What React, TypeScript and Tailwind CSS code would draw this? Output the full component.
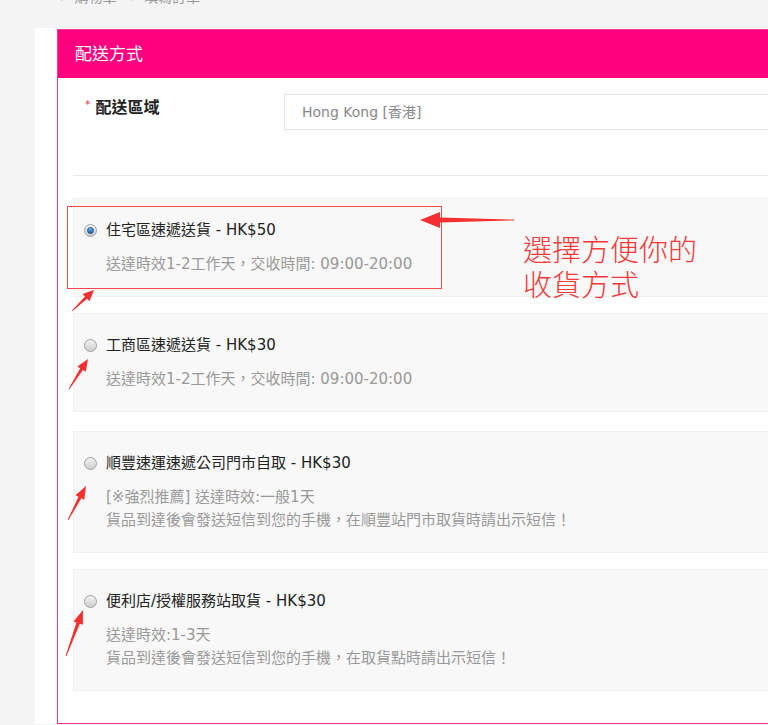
import React from 'react';

const cjk = { fontFamily: '"DejaVu Sans", "Noto Sans CJK TC", sans-serif' };
const cjkTitle = { fontFamily: '"Noto Sans CJK TC", sans-serif' };

type Option = {
  name: string;
  price: string;
  lines: string[];
  selected?: boolean;
  gap: string;
};

const options: Option[] = [
  { name: '住宅區速遞送貨', price: 'HK$50', lines: ['送達時效1-2工作天，交收時間: 09:00-20:00'], selected: true, gap: 'mb-4' },
  { name: '工商區速遞送貨', price: 'HK$30', lines: ['送達時效1-2工作天，交收時間: 09:00-20:00'], gap: 'mb-[19px]' },
  {
    name: '順豐速運速遞公司門市自取',
    price: 'HK$30',
    lines: ['[※強烈推薦] 送達時效:一般1天', '貨品到達後會發送短信到您的手機，在順豐站門市取貨時請出示短信！'],
    gap: 'mb-4',
  },
  {
    name: '便利店/授權服務站取貨',
    price: 'HK$30',
    lines: ['送達時效:1-3天', '貨品到達後會發送短信到您的手機，在取貨點時請出示短信！'],
    gap: 'mb-0',
  },
];

function Radio({ checked }: { checked?: boolean }) {
  return (
    <span className="flex h-[13px] w-[13px] flex-shrink-0 items-center justify-center rounded-full border border-[#a0a0a0] bg-gradient-to-b from-[#f2f2f2] to-[#cfcfcf]">
      {checked && (
        <span className="h-[7px] w-[7px] rounded-full border border-[#1d4f80] bg-gradient-to-b from-[#6fb6f0] to-[#1a5fa8]" />
      )}
    </span>
  );
}

// tapered arrow from tail to tip
function arrowPoints(tx: number, ty: number, px: number, py: number, head = 18, half = 8, shaft = 2.5) {
  const len = Math.hypot(px - tx, py - ty);
  const dx = (px - tx) / len;
  const dy = (py - ty) / len;
  const nx = -dy;
  const ny = dx;
  const bx = px - dx * head;
  const by = py - dy * head;
  const pts = [
    [tx + nx * 0.4, ty + ny * 0.4],
    [bx + nx * shaft, by + ny * shaft],
    [bx + nx * half, by + ny * half],
    [px, py],
    [bx - nx * half, by - ny * half],
    [bx - nx * shaft, by - ny * shaft],
    [tx - nx * 0.4, ty - ny * 0.4],
  ];
  return pts.map((p) => p.join(',')).join(' ');
}

function Annotations() {
  return (
    <div className="pointer-events-none absolute left-0 top-0 h-[725px] w-[768px]">
      <div className="absolute left-[67px] top-[206px] h-[83px] w-[375px] border border-[#f24b4b]" />
      <div className="absolute left-[523px] top-[231px] text-[29px] font-light leading-[35px] text-[#f23a3a]" style={cjkTitle}>
        <div>選擇方便你的</div>
        <div>收貨方式</div>
      </div>
      <svg className="absolute left-0 top-0" width="768" height="725">
        <polygon points={arrowPoints(514, 220, 420, 220, 20, 8, 2.5)} fill="#f2302f" />
        <polygon points={arrowPoints(72, 311, 94, 290, 11, 5, 1.5)} fill="#f2302f" />
        <polygon points={arrowPoints(69, 389, 88, 359, 12, 5, 1.6)} fill="#f2302f" />
        <polygon points={arrowPoints(68, 520, 86, 486, 13, 5, 1.6)} fill="#f2302f" />
        <polygon points={arrowPoints(66, 656, 83, 610, 14, 5, 1.8)} fill="#f2302f" />
      </svg>
    </div>
  );
}

export default function App() {
  return (
    <div className="relative h-[725px] w-[768px] overflow-hidden bg-[#f4f4f4]" style={cjk}>
      <div className="h-[28px] overflow-hidden pl-[60px]">
        <div className="mt-[-13px] text-[14px] leading-[20px] text-[#999]">›&nbsp;&nbsp;購物車&nbsp;&nbsp;&nbsp;›&nbsp;&nbsp;填寫訂單</div>
      </div>
      <div className="ml-[35px] bg-white pl-[22px] pt-[1px]">
        <div className="w-[780px] border border-[#ff2f95] bg-white">
          <div className="h-[48px] bg-[#ff007f] pl-[17px] text-[17px] leading-[46px] text-white" style={cjkTitle}>配送方式</div>
          <div className="px-[15px] pb-[32px] pt-[16px]">
            <div className="flex h-[36px] items-start">
              <div className="flex w-[211px] items-start pl-[12px] pt-[1px]">
                <span className="mr-[5px] mt-[4px] text-[11px] leading-[12px] text-[#e4393c]">*</span>
                <span className="text-[16px] font-bold leading-[22px] text-[#222]" style={cjkTitle}>配送區域</span>
              </div>
              <div className="h-[36px] flex-1 border border-[#e3e3e3] pl-[17px] text-[14px] leading-[34px] text-[#888]">
                Hong Kong [香港]
              </div>
            </div>
            <div className="mb-[22px] mt-[45px] h-px bg-[#e8e8e8]" />
            {options.map((o) => (
              <div key={o.name} className={`${o.gap} border border-[#f0f0f0] bg-[#f8f8f8] pb-[20px] pl-[10px] pt-[21px]`}>
                <div className="flex items-center">
                  <Radio checked={o.selected} />
                  <span className="ml-[9px] text-[15px] leading-[20px] text-[#222]">
                    {o.name} - {o.price}
                  </span>
                </div>
                <div className="mt-[13px] pl-[22px] text-[15px] leading-[23px] text-[#999]">
                  {o.lines.map((l) => (
                    <div key={l}>{l}</div>
                  ))}
                </div>
              </div>
            ))}
          </div>
        </div>
      </div>
      <Annotations />
    </div>
  );
}
